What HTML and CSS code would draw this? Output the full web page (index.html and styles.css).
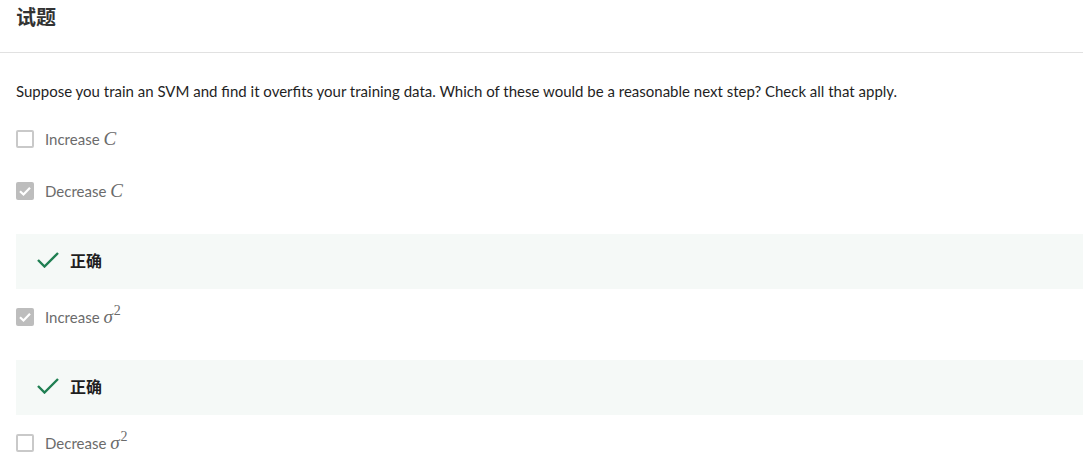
FILE: index.html
```html
<!DOCTYPE html>
<html lang="zh">
<head>
<meta charset="utf-8">
<title>试题</title>
<link rel="stylesheet" href="styles.css">
</head>
<body>
<header class="header">
  <h1 class="title">试题</h1>
</header>
<main class="content">
  <p class="question">Suppose you train an SVM and find it overfits your training data. Which of these would be a reasonable next step? Check all that apply.</p>

  <div class="option">
    <span class="box"></span>
    <span class="label">Increase <span class="math">C</span></span>
  </div>

  <div class="option">
    <span class="box checked"><svg viewBox="0 0 18 18" width="18" height="18"><path d="M4 9.2 L7.5 12.5 L14 5.8" fill="none" stroke="#fff" stroke-width="2.2"/></svg></span>
    <span class="label">Decrease <span class="math">C</span></span>
  </div>

  <div class="feedback">
    <svg class="ok" viewBox="0 0 22 16" width="22" height="16"><path d="M1 8 L7.5 14.5 L21 1" fill="none" stroke="#1f7f52" stroke-width="2.4"/></svg>
    <span class="ok-text">正确</span>
  </div>

  <div class="option">
    <span class="box checked"><svg viewBox="0 0 18 18" width="18" height="18"><path d="M4 9.2 L7.5 12.5 L14 5.8" fill="none" stroke="#fff" stroke-width="2.2"/></svg></span>
    <span class="label">Increase <span class="math">σ<sup>2</sup></span></span>
  </div>

  <div class="feedback">
    <svg class="ok" viewBox="0 0 22 16" width="22" height="16"><path d="M1 8 L7.5 14.5 L21 1" fill="none" stroke="#1f7f52" stroke-width="2.4"/></svg>
    <span class="ok-text">正确</span>
  </div>

  <div class="option">
    <span class="box"></span>
    <span class="label">Decrease <span class="math">σ<sup>2</sup></span></span>
  </div>
</main>
</body>
</html>
```

FILE: styles.css
```css
* { box-sizing: border-box; }
html, body { margin: 0; padding: 0; background: #fff; }
body {
  font-family: Lato, "Noto Sans CJK SC", sans-serif;
  color: #1f1f1f;
  overflow: hidden;
}
.header {
  height: 53px;
  border-bottom: 1px solid #e1e1e1;
  padding: 0 16px;
  display: flex;
  align-items: flex-start;
}
.title {
  margin: 5px 0 0;
  font-family: "Noto Sans CJK SC", sans-serif;
  font-size: 20px;
  font-weight: 700;
  line-height: 24px;
  color: #333;
}
.content {
  padding: 0 0 0 16px;
}
.question {
  margin: 28px 0 29px;
  font-size: 15px;
  line-height: 20px;
  color: #1f1f1f;
}
.option {
  display: flex;
  align-items: center;
  height: 18px;
  margin-bottom: 34px;
}
.box {
  width: 18px;
  height: 18px;
  border: 2px solid #c9c9c9;
  border-radius: 2px;
  flex: none;
  display: flex;
  align-items: center;
  justify-content: center;
}
.box.checked {
  border: none;
  background: #bdbdbd;
}
.label {
  margin-left: 11px;
  font-size: 15px;
  color: #6b6b6b;
  white-space: nowrap;
}
.math {
  font-family: "Liberation Serif", serif;
  font-style: italic;
  font-size: 19px;
  color: #6b6b6b;
}
.math sup {
  font-style: normal;
  font-size: 14px;
  vertical-align: 8px;
  line-height: 0;
  margin-left: 1px;
}
.feedback {
  height: 55px;
  background: #f5f9f7;
  display: flex;
  align-items: center;
  padding-left: 21px;
  padding-bottom: 3px;
  margin-bottom: 19px;
}
.ok { flex: none; }
.ok-text {
  margin-left: 11px;
  font-family: "Noto Sans CJK SC", sans-serif;
  font-weight: 700;
  font-size: 16px;
  color: #1f1f1f;
}
```
